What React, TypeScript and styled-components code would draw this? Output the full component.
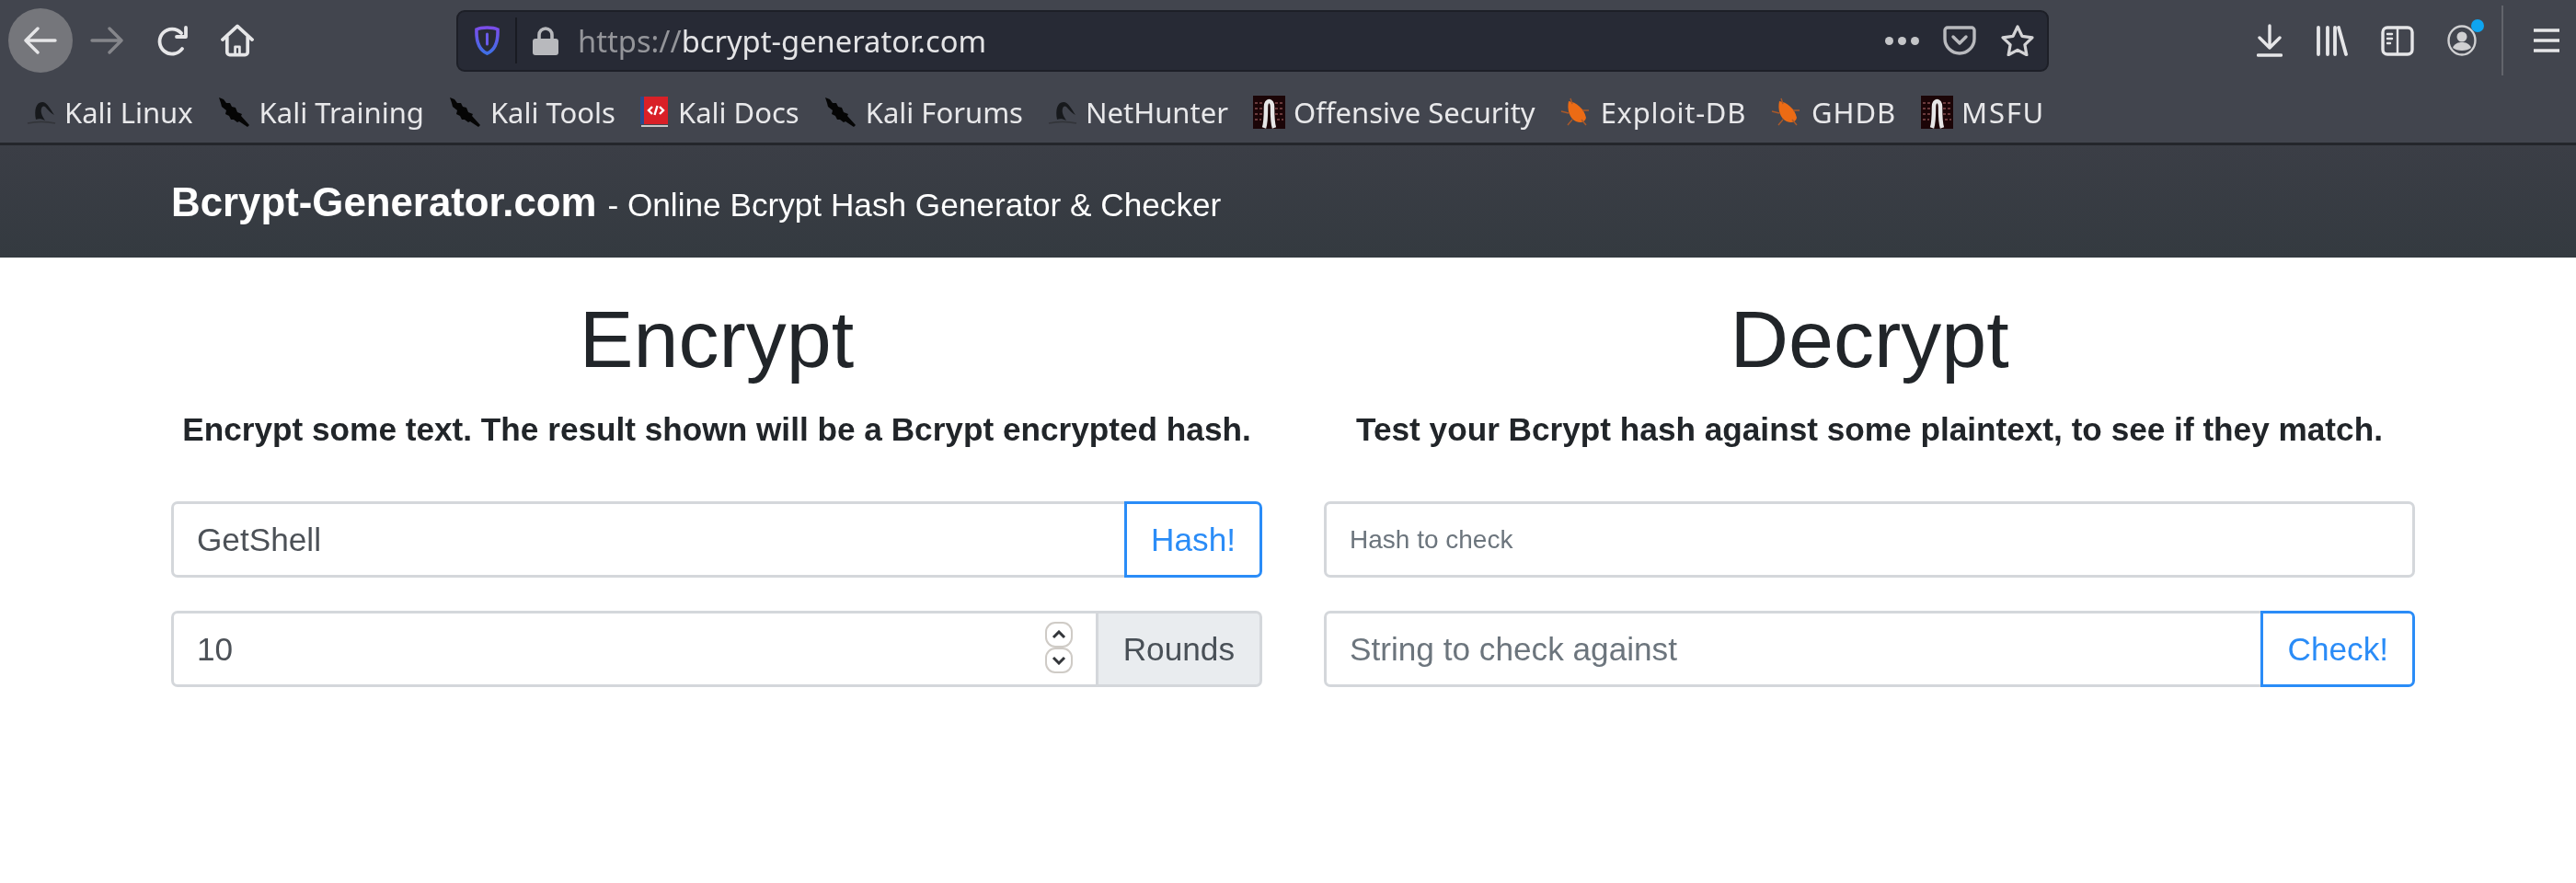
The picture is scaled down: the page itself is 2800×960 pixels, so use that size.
import React from "react";
import styled, { createGlobalStyle } from "styled-components";

const GlobalStyle = createGlobalStyle`
  html, body {
    margin: 0;
    padding: 0;
    background: #fff;
    overflow: hidden;
  }
  * { box-sizing: border-box; }
`;

const Back = () => (
  <svg width="36" height="32" viewBox="0 0 36 32" fill="none" stroke="currentColor" strokeWidth="3.4" strokeLinecap="round" strokeLinejoin="round">
    <path d="M2 16h32M15 3 2 16l13 13" />
  </svg>
);

const Forward = () => (
  <svg width="36" height="32" viewBox="0 0 36 32" fill="none" stroke="currentColor" strokeWidth="3.4" strokeLinecap="round" strokeLinejoin="round">
    <path d="M2 16h32M21 3l13 13-13 13" />
  </svg>
);

const Reload = () => (
  <svg width="35" height="33" viewBox="0 0 35 33" fill="none" stroke="currentColor" strokeWidth="3.8" strokeLinecap="round" strokeLinejoin="round">
    <path d="M28 25a13.500 13.500 0 1 1-1-17" />
    <path d="M32 2v10H22" />
  </svg>
);

const Home = () => (
  <svg width="37" height="36" viewBox="0 0 37 36" fill="none" stroke="currentColor" strokeWidth="3.8" strokeLinecap="round" strokeLinejoin="round">
    <path d="M2 17 18.500 2 35 17M7 14v17a3 3 0 0 0 3 3h17a3 3 0 0 0 3-3V14" />
    <path d="M16 34v-9h5v9" strokeWidth="2.800" />
  </svg>
);

const Shield = () => (
  <svg width="27" height="32" viewBox="0 0 27 32">
    <defs>
      <linearGradient id="shieldGrad" x1="0" y1="0" x2="0" y2="1">
        <stop offset="0" stopColor="#7b4dea" />
        <stop offset="1" stopColor="#3f6fe6" />
      </linearGradient>
    </defs>
    <path d="M13.500 2C9 2 5 2.500 2 4c-.5 12 2 22 11.500 26C23 26 25.500 16 25 4c-3-1.500-7-2-11.500-2Z" fill="none" stroke="url(#shieldGrad)" strokeWidth="3.600" />
    <path d="M13.500 9v11" stroke="#6a5bea" strokeWidth="3" strokeLinecap="round" />
  </svg>
);

const Lock = () => (
  <svg width="28" height="31" viewBox="0 0 28 31">
    <path d="M7 14V9a7 7 0 0 1 14 0v5" fill="none" stroke="#b8b9bd" strokeWidth="3.600" />
    <rect x="0" y="13" width="28" height="18" rx="3" fill="#b8b9bd" />
  </svg>
);

const Pocket = () => (
  <svg width="36" height="32" viewBox="0 0 36 32" fill="none" stroke="#b9babe" strokeWidth="3.400" strokeLinecap="round" strokeLinejoin="round">
    <path d="M5 2h26a3 3 0 0 1 3 3v9a16 16 0 0 1-32 0V5a3 3 0 0 1 3-3Z" />
    <path d="m11 12 7 7 7-7" />
  </svg>
);

const Star = () => (
  <svg width="36" height="34" viewBox="0 0 36 34" fill="none" stroke="#d4d4d6" strokeWidth="3.200" strokeLinejoin="round">
    <path d="m18 2 4.900 10.300 11.100 1.500-8.100 7.800 2 11.100L18 27.300 8.100 32.700l2-11.100L2 13.800l11.100-1.500Z" />
  </svg>
);

const Download = () => (
  <svg width="28" height="36" viewBox="0 0 28 36" fill="none" stroke="currentColor" strokeWidth="3.400" strokeLinecap="round" strokeLinejoin="round">
    <path d="M14 2v24M3 15l11 11 11-11M1.500 34h25" />
  </svg>
);

const Library = () => (
  <svg width="35" height="33" viewBox="0 0 35 33" fill="none" stroke="currentColor" strokeWidth="3.800" strokeLinecap="round">
    <path d="M3 2v29M13 2v29M21 2v29M25 2l8 29" />
  </svg>
);

const Sidebar = () => (
  <svg width="36" height="33" viewBox="0 0 36 33" fill="none" stroke="currentColor" strokeWidth="3.400" strokeLinecap="round">
    <rect x="2" y="2" width="32" height="29" rx="5" />
    <path d="M18 2v29M7 9h5M7 14h5M7 19h3" strokeWidth="2.400" />
  </svg>
);

const Account = () => (
  <svg width="32" height="34" viewBox="0 0 32 34" fill="none">
    <ellipse cx="16" cy="17" rx="14.500" ry="15.500" stroke="#d0d0d2" strokeWidth="2.400" />
    <circle cx="16" cy="13" r="5.500" fill="#d0d0d2" />
    <path d="M6 25c2-5 6-6 10-6s8 1 10 6c-5 4-15 4-20 0Z" fill="#d0d0d2" />
  </svg>
);

const Menu = () => (
  <svg width="28" height="28" viewBox="0 0 28 28" fill="none" stroke="currentColor" strokeWidth="3.400">
    <path d="M0 3h28M0 14h28M0 25h28" />
  </svg>
);

const KaliIcon = () => (
  <svg width="32" height="30" viewBox="0 0 32 30" fill="none">
    <path d="M10 23C8 13 10 4 17 4c5 0 9 8 13 14-4-2-7-6-10-9-3-2-5 2-4 7 1 4 3 6 4 8-4-2-7-2-10-1Z" fill="#17191c" />
    <path d="M1 27c9-2 21-2 30 0" stroke="#33353a" strokeWidth="1.600" />
  </svg>
);

const KnifeIcon = () => (
  <svg width="36" height="34" viewBox="0 0 36 34">
    <path d="M1 1l5 2 3 4 4 0 2 4 4 1 2 5 5 2-1 2 9 10-2 2-9-6-2 1-4-3-3 0-2-4-4-2 1-4-5-4-1-4Z" fill="#050505" />
  </svg>
);

const BookIcon = () => (
  <svg width="32" height="36" viewBox="0 0 32 36">
    <rect x="4" y="1" width="26" height="30" fill="#d92027" />
    <rect x="0" y="1" width="4" height="30" fill="#2a4a8c" />
    <rect x="1" y="32" width="29" height="2" fill="#c9c9c9" />
    <path d="m13 12-4 4 4 4M21 12l4 4-4 4M18.500 11l-3 10" fill="none" stroke="#fff" strokeWidth="2.400" />
  </svg>
);

const OffsecIcon = () => (
  <svg width="35" height="36" viewBox="0 0 35 36">
    <rect width="35" height="36" fill="#1b0507" />
    <path d="M2 8h9M2 14h9M2 20h9M2 26h7M24 8h9M24 14h9M24 20h9M26 26h7" stroke="#6a3a3c" strokeWidth="2" strokeDasharray="3 2" />
    <path d="M12 35c2-6 2-14 2-23 0-8 7-8 7 0 0 9 0 17 2 23" fill="none" stroke="#e6e6e6" strokeWidth="4.500" />
  </svg>
);

const BugIcon = () => (
  <svg width="35" height="32" viewBox="0 0 35 32">
    <path d="M9 4c8 1 17 8 19 18-1 5-6 6-11 4C10 23 7 13 9 4Z" fill="#ec6b14" />
    <path d="M11 1l2 6M31 14l-7 0M1 15l8 2M28 30l-5-6M8 30l5-6" stroke="#a9592a" strokeWidth="1.400" />
  </svg>
);

const bookmarks = [
  { label: "Kali Linux", icon: <KaliIcon /> },
  { label: "Kali Training", icon: <KnifeIcon /> },
  { label: "Kali Tools", icon: <KnifeIcon /> },
  { label: "Kali Docs", icon: <BookIcon /> },
  { label: "Kali Forums", icon: <KnifeIcon /> },
  { label: "NetHunter", icon: <KaliIcon /> },
  { label: "Offensive Security", icon: <OffsecIcon /> },
  { label: "Exploit-DB", icon: <BugIcon />, tracking: 0.7 },
  { label: "GHDB", icon: <BugIcon />, tracking: 0.9 },
  { label: "MSFU", icon: <OffsecIcon />, tracking: 1.8 },
];

const App = () => {
  return (
    <>
      <GlobalStyle />
      <Page>
        <Toolbar>
          <BackButton><Back /></BackButton>
          <NavButton $dim><Forward /></NavButton>
          <NavButton><Reload /></NavButton>
          <NavButton><Home /></NavButton>
          <UrlBar>
            <Shield />
            <UrlDivider />
            <Lock />
            <UrlText>
              <span>https://</span>bcrypt-generator.com
            </UrlText>
            <UrlDots>
              <i /><i /><i />
            </UrlDots>
            <Pocket />
            <Star />
          </UrlBar>
          <RightTools>
            <Download />
            <Library />
            <Sidebar />
            <AccountWrap>
              <Account />
              <Badge />
            </AccountWrap>
            <ToolDivider />
            <Menu />
          </RightTools>
        </Toolbar>
        <BookmarkBar>
          {bookmarks.map((b) => (
            <Bookmark key={b.label} $tracking={b.tracking}>
              <BookmarkIcon>{b.icon}</BookmarkIcon>
              {b.label}
            </Bookmark>
          ))}
        </BookmarkBar>
        <SiteHeader>
          <Brand>Bcrypt-Generator.com</Brand>
          <Tagline>- Online Bcrypt Hash Generator &amp; Checker</Tagline>
        </SiteHeader>
        <Columns>
          <Column>
            <Title>Encrypt</Title>
            <Lead>Encrypt some text. The result shown will be a Bcrypt encrypted hash.</Lead>
            <InputGroup>
              <Field>GetShell</Field>
              <ActionButton>Hash!</ActionButton>
            </InputGroup>
            <InputGroup>
              <Field>
                10
                <Spinner>
                  <SpinBtn>
                    <svg width="16" height="10" viewBox="0 0 16 10" fill="none" stroke="#33363a" strokeWidth="3"><path d="m2 8 6-6 6 6" /></svg>
                  </SpinBtn>
                  <SpinBtn>
                    <svg width="16" height="10" viewBox="0 0 16 10" fill="none" stroke="#33363a" strokeWidth="3"><path d="m2 2 6 6 6-6" /></svg>
                  </SpinBtn>
                </Spinner>
              </Field>
              <Addon>Rounds</Addon>
            </InputGroup>
          </Column>
          <Column>
            <Title>Decrypt</Title>
            <Lead>Test your Bcrypt hash against some plaintext, to see if they match.</Lead>
            <InputGroup>
              <Field $small $placeholder>Hash to check</Field>
            </InputGroup>
            <InputGroup>
              <Field $placeholder>String to check against</Field>
              <ActionButton>Check!</ActionButton>
            </InputGroup>
          </Column>
        </Columns>
      </Page>
    </>
  );
};

const Page = styled.div`
  width: 2800px;
  height: 960px;
  background: #fff;
  font-family: "Liberation Sans", Arial, sans-serif;
  filter: blur(0.6px);
`;

const Toolbar = styled.div`
  display: flex;
  align-items: center;
  height: 88px;
  padding-left: 9px;
  background: #42454e;
  color: #e6e6e8;
`;

const BackButton = styled.div`
  width: 70px;
  height: 70px;
  border-radius: 50%;
  background: #75767b;
  display: flex;
  align-items: center;
  justify-content: center;
`;

const NavButton = styled.div<{ $dim?: boolean }>`
  width: 36px;
  margin-left: 35px;
  display: flex;
  justify-content: center;
  color: ${(p) => (p.$dim ? "#85868b" : "#e6e6e8")};
  &:nth-child(2) {
    margin-left: 19px;
  }
`;

const UrlBar = styled.div`
  display: flex;
  align-items: center;
  width: 1731px;
  height: 67px;
  margin-left: 220px;
  padding: 0 14px 0 18px;
  background: #272a35;
  border: 2px solid #1d1f27;
  border-radius: 9px;
`;

const UrlDivider = styled.div`
  width: 2px;
  height: 50px;
  margin: 0 17px;
  background: #191b22;
`;

const UrlText = styled.div`
  flex: 1;
  margin-left: 21px;
  font-family: "Noto Sans", sans-serif;
  font-size: 32.700px;
  color: #e4e4e6;
  white-space: nowrap;
  span {
    color: #94959a;
  }
`;

const UrlDots = styled.div`
  display: flex;
  gap: 5px;
  margin-right: 26px;
  i {
    width: 9px;
    height: 9px;
    border-radius: 50%;
    background: #c4c5c8;
  }
  & + svg {
    margin-right: 27px;
  }
`;

const RightTools = styled.div`
  display: flex;
  align-items: center;
  gap: 36px;
  margin-left: 226px;
`;

const AccountWrap = styled.div`
  position: relative;
  display: flex;
  margin-right: -9px;
`;

const Badge = styled.div`
  position: absolute;
  top: -6px;
  right: -8px;
  width: 14px;
  height: 14px;
  border-radius: 50%;
  background: #0ea5f0;
`;

const ToolDivider = styled.div`
  width: 2px;
  height: 76px;
  margin-right: -3px;
  background: #62646b;
`;

const BookmarkBar = styled.div`
  display: flex;
  align-items: center;
  height: 70px;
  padding: 0 0 0 29px;
  gap: 27px;
  background: #42454e;
  border-bottom: 3px solid #24262b;
  color: #e8e8ea;
  font-family: "Noto Sans", sans-serif;
  font-size: 31px;
`;

const Bookmark = styled.div<{ $tracking?: number }>`
  display: flex;
  align-items: center;
  gap: 9px;
  white-space: nowrap;
  letter-spacing: ${(p) => p.$tracking ?? 0}px;
`;

const BookmarkIcon = styled.span`
  display: flex;
`;

const SiteHeader = styled.header`
  display: flex;
  align-items: baseline;
  gap: 12px;
  height: 122px;
  padding: 37px 0 0 186px;
  background: linear-gradient(#3b3e46, #343a40);
  color: #fff;
`;

const Brand = styled.div`
  font-size: 43.800px;
  font-weight: 700;
`;

const Tagline = styled.div`
  font-size: 35.200px;
`;

const Columns = styled.main`
  display: flex;
  gap: 67px;
  padding: 35px 175px 0 186px;
`;

const Column = styled.section`
  flex: 1;
  text-align: center;
  color: #212529;
`;

const Title = styled.h1`
  margin: 0;
  font-size: 88px;
  font-weight: 500;
  line-height: 107px;
`;

const Lead = styled.p`
  margin: 18px 0 0;
  font-size: 35.200px;
  font-weight: 700;
  line-height: 53px;
  white-space: nowrap;
`;

const InputGroup = styled.div`
  display: flex;
  height: 83px;
  margin-top: 36px;
  & + & {
    margin-top: 36px;
  }
  p + & {
    margin-top: 52px;
  }
`;

const Field = styled.div<{ $small?: boolean; $placeholder?: boolean }>`
  position: relative;
  flex: 1;
  display: flex;
  align-items: center;
  padding-left: 25px;
  border: 3px solid #d4d7db;
  border-radius: 7px;
  background: #fff;
  font-size: ${(p) => (p.$small ? "28px" : "35.200px")};
  color: ${(p) => (p.$placeholder ? "#6c757d" : "#4c5157")};
  &:not(:last-child) {
    border-top-right-radius: 0;
    border-bottom-right-radius: 0;
    border-right: 0;
  }
`;

const ActionButton = styled.button`
  padding: 0 26px;
  border: 3px solid #2a8cf7;
  border-radius: 0 7px 7px 0;
  background: #fff;
  color: #2a8cf7;
  font-family: inherit;
  font-size: 35.200px;
`;

const Addon = styled.div`
  display: flex;
  align-items: center;
  padding: 0 27px;
  border: 3px solid #d4d7db;
  border-radius: 0 7px 7px 0;
  background: #e9ecef;
  color: #495057;
  font-size: 35.200px;
`;

const Spinner = styled.div`
  position: absolute;
  top: 9px;
  right: 25px;
  display: flex;
  flex-direction: column;
`;

const SpinBtn = styled.div`
  width: 30px;
  height: 28px;
  display: flex;
  align-items: center;
  justify-content: center;
  border: 2px solid #cfcbc6;
  border-radius: 11px;
  background: #fff;
`;

export default App;
